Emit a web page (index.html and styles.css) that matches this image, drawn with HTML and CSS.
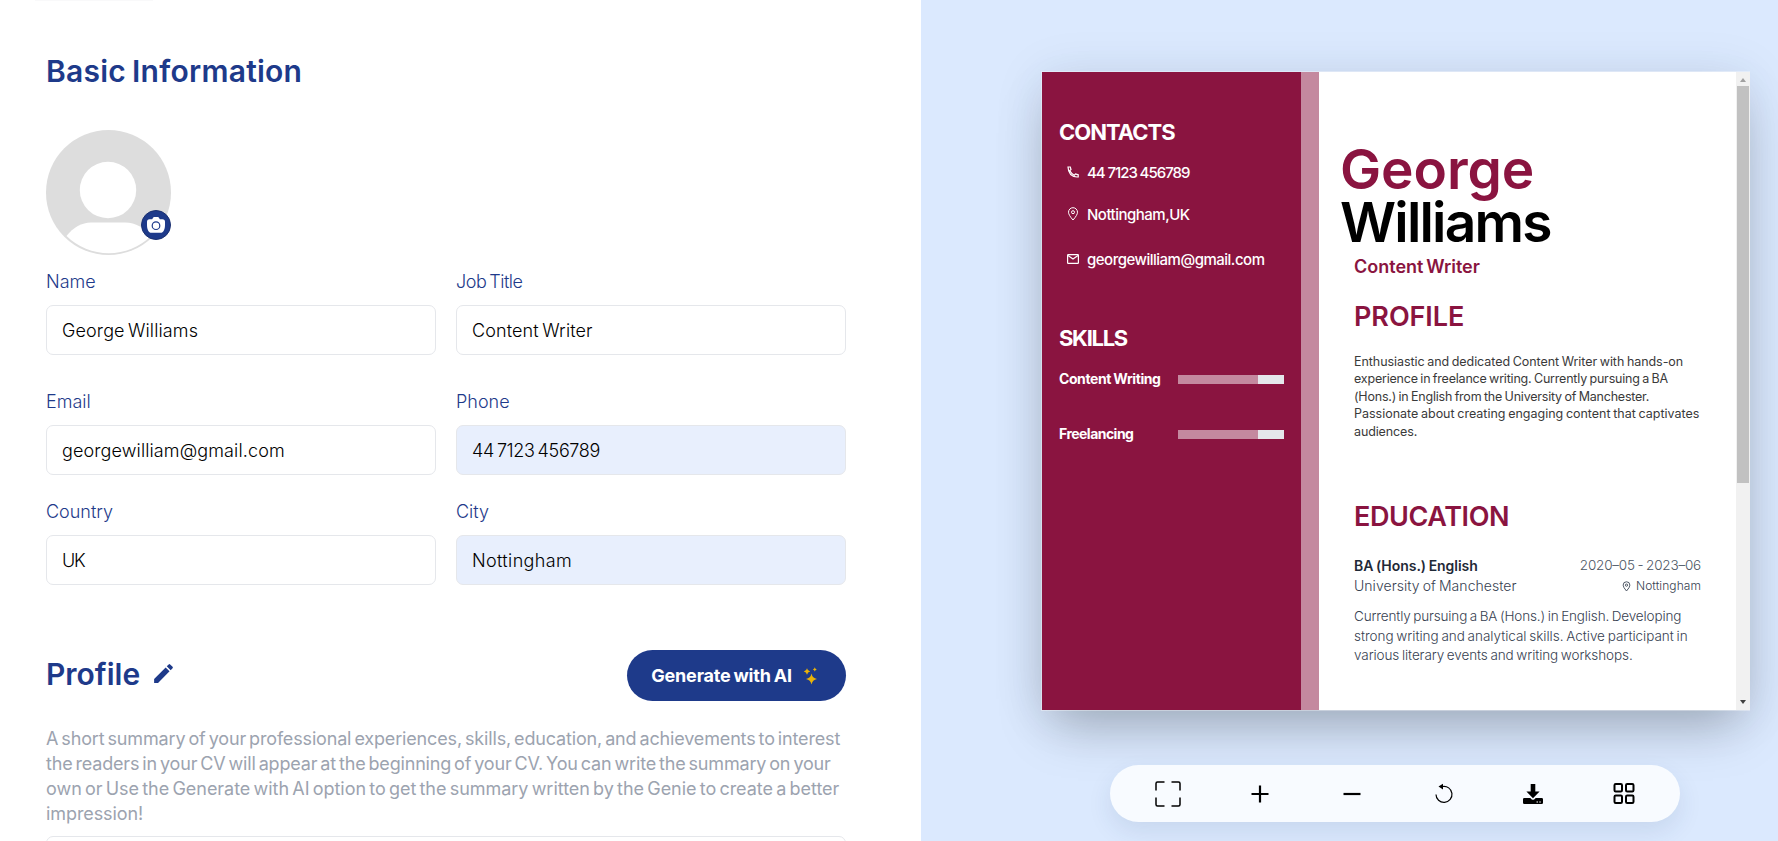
FILE: index.html
```html
<!DOCTYPE html>
<html lang="en">
<head>
<meta charset="utf-8">
<title>CV Builder</title>
<link rel="stylesheet" href="styles.css">
</head>
<body>
<main class="app">
  <section class="form">
    <div class="tab-edge"></div>
    <h2 class="heading basic">Basic Information</h2>
    <div class="avatar">
      <svg width="125" height="125" viewBox="0 0 125 125">
        <circle cx="62.5" cy="62.5" r="62.5" fill="#ddd"/>
        <circle cx="62" cy="60" r="28.2" fill="#fff"/>
        <path d="M20.5 106C27 97.500 36 92.500 45 92.500H79C90 92.500 98 98 105 106A60.500 60.500 0 0 1 20.500 106Z" fill="#fff"/>
      </svg>
      <span class="badge">
        <svg width="20" height="20" viewBox="0 0 20 20">
          <path d="M6.200 4.200L7.200 2.500Q7.500 2 8.100 2H11.900Q12.500 2 12.800 2.500L13.800 4.200H16.500Q19 4.200 19 6.700V10C19 14 17.500 17.800 14.500 17.800H5.500C2.500 17.800 1 14 1 10V6.700Q1 4.200 3.500 4.200Z" fill="#fff"/>
          <circle cx="10" cy="10.700" r="3.800" fill="#fff" stroke="#1e3a8a" stroke-width="1.200"/>
        </svg>
      </span>
    </div>
    <div class="row first">
      <div class="field"><label>Name</label><div class="input">George Williams</div></div>
      <div class="field"><label class="job">Job Title</label><div class="input">Content Writer</div></div>
    </div>
    <div class="row second">
      <div class="field"><label>Email</label><div class="input">georgewilliam@gmail.com</div></div>
      <div class="field"><label>Phone</label><div class="input filled digits">44 7123 456789</div></div>
    </div>
    <div class="row third">
      <div class="field"><label>Country</label><div class="input country">UK</div></div>
      <div class="field"><label>City</label><div class="input filled city">Nottingham</div></div>
    </div>
    <div class="profile-head">
      <h2 class="heading profile">Profile</h2>
      <svg class="pencil" width="25" height="25" viewBox="0 0 24 24" fill="#1e3a8a"><path d="M3 17.250V21h3.750L17.810 9.940l-3.750-3.750L3 17.250zM20.710 7.040a.996.996 0 0 0 0-1.410l-2.340-2.340a.996.996 0 0 0-1.410 0l-1.830 1.830 3.750 3.750 1.830-1.830z"/></svg>
      <button class="generate">Generate with AI
        <svg width="15" height="18" viewBox="0 0 15 18" fill="#eab308"><path d="M8.500 6.500Q9.400 11.200 14 12Q9.400 12.800 8.500 17.500Q7.600 12.800 3 12Q7.600 11.200 8.500 6.500ZM4 1.200Q4.600 4 7.200 4.500Q4.600 5 4 7.800Q3.400 5 .8 4.500Q3.400 4 4 1.200ZM11.800.3Q12.200 2 13.800 2.400Q12.200 2.800 11.800 4.500Q11.400 2.800 9.800 2.400Q11.400 2 11.800.3Z"/></svg>
      </button>
    </div>
    <p class="hint">
      <span class="h1">A short summary of your professional experiences, skills, education, and achievements to interest</span>
      <span class="h2">the readers in your CV will appear at the beginning of your CV. You can write the summary on your</span>
      <span class="h3">own or Use the Generate with AI option to get the summary written by the Genie to create a better</span>
      <span class="h4">impression!</span>
    </p>
    <div class="textarea"></div>
  </section>

  <section class="preview">
    <article class="cv">
      <aside class="side">
        <h3 class="side-title contacts">CONTACTS</h3>
        <div class="contact phone"><svg width="12" height="12" viewBox="0 0 12 12" fill="none" stroke="#fff" stroke-width="1.200"><path d="M1 1H3.300L4 3.500L2.800 4.700Q4.300 7.500 7.300 9.200L8.500 8L11.200 8.800V11H10Q1.500 10.500 1 1Z"/></svg><span class="num">44 7123 456789</span></div>
        <div class="contact place"><svg width="12" height="14" viewBox="0 0 12 14" fill="none" stroke="#fff" stroke-width="1"><path d="M6 13Q1.500 8 1.500 5.200A4.500 4.500 0 0 1 10.500 5.200Q10.500 8 6 13Z"/><circle cx="6" cy="5.200" r="1.500"/></svg><span>Nottingham,UK</span></div>
        <div class="contact mail"><svg width="12" height="12" viewBox="0 0 12 12" fill="none" stroke="#fff" stroke-width="1.200"><rect x=".6" y="1.600" width="10.800" height="8.800" rx=".6"/><path d="M1 2.500L6 6L11 2.500"/></svg><span>georgewilliam@gmail.com</span></div>
        <h3 class="side-title skills">SKILLS</h3>
        <div class="skill"><span>Content Writing</span><div class="bar"><div class="level" style="width:75%"></div></div></div>
        <div class="skill"><span class="free">Freelancing</span><div class="bar"><div class="level" style="width:75%"></div></div></div>
      </aside>
      <div class="stripe"></div>
      <div class="main">
        <h1 class="name"><span class="given">George</span><span class="family">Williams</span></h1>
        <div class="role">Content Writer</div>
        <h3 class="section about">PROFILE</h3>
        <p class="summary">
          <span class="s1">Enthusiastic and dedicated Content Writer with hands-on</span>
          <span class="s2">experience in freelance writing. Currently pursuing a BA</span>
          <span class="s3">(Hons.) in English from the University of Manchester.</span>
          <span class="s4">Passionate about creating engaging content that captivates</span>
          <span class="s5">audiences.</span>
        </p>
        <h3 class="section education">EDUCATION</h3>
        <div class="line"><span class="degree">BA (Hons.) English</span><span class="date">2020–05 - 2023–06</span></div>
        <div class="line"><span class="school">University of Manchester</span><span class="town"><svg width="9" height="11" viewBox="0 0 12 14" fill="none" stroke="#4b5563" stroke-width="1.300"><path d="M6 13Q1.500 8 1.500 5.200A4.500 4.500 0 0 1 10.500 5.200Q10.500 8 6 13Z"/><circle cx="6" cy="5.200" r="1.500"/></svg>Nottingham</span></div>
        <p class="detail">
          <span class="d1">Currently pursuing a BA (Hons.) in English. Developing</span>
          <span class="d2">strong writing and analytical skills. Active participant in</span>
          <span class="d3">various literary events and writing workshops.</span>
        </p>
      </div>
      <div class="scroll">
        <svg width="14" height="14" viewBox="0 0 14 14"><path d="M4 10L7 6L10 10Z" fill="#a0a0a0"/></svg>
        <div class="thumb"></div>
        <svg width="14" height="14" viewBox="0 0 14 14"><path d="M4 4H10L7 8Z" fill="#404040"/></svg>
      </div>
    </article>
    <nav class="tools">
      <svg width="26" height="26" viewBox="0 0 26 26" fill="none" stroke="#000" stroke-width="1.500"><path d="M1 9.500V2.500Q1 1 2.500 1H9.500M16.500 1H23.500Q25 1 25 2.500V9.500M25 16.500V23.500Q25 25 23.500 25H16.500M9.500 25H2.500Q1 25 1 23.500V16.500"/></svg>
      <svg width="26" height="26" viewBox="0 0 26 26" fill="none" stroke="#000" stroke-width="2.200"><path d="M13 4.500V21.500M4.500 13H21.500"/></svg>
      <svg width="26" height="26" viewBox="0 0 26 26" fill="none" stroke="#000" stroke-width="2.200"><path d="M4.500 13H21.500"/></svg>
      <svg width="26" height="26" viewBox="0 0 26 26" fill="none" stroke="#000" stroke-width="1.200"><path d="M11.500 5.500A8 8 0 1 1 5 13.400"/><path d="M7.500 5.600L12 2.800V8.400Z" fill="#000" stroke="none"/></svg>
      <svg class="download" width="26" height="26" viewBox="0 0 26 26" fill="#000"><path d="M10.700 3H15.300V10.500H19.600L13 17.200L6.400 10.500H10.700Z"/><path d="M4.300 17H10.300L11.800 18.400Q13 19.300 14.200 18.400L15.700 17H21.700Q23 17 23 18.200V21.800Q23 23 21.700 23H4.300Q3 23 3 21.800V18.200Q3 17 4.300 17Z"/><path d="M16.500 20.500h1.500v1h-1.500zM19.300 20.500h1.500v1h-1.500z" fill="#fff"/></svg>
      <svg class="templates" width="26" height="26" viewBox="0 0 26 26" fill="none" stroke="#000" stroke-width="2"><rect x="3.500" y="3" width="7.500" height="7.500" rx="1.200"/><rect x="15" y="3" width="7.500" height="7.500" rx="1.200"/><rect x="3.500" y="14.500" width="7.500" height="7.500" rx="1.200"/><rect x="15" y="14.500" width="7.500" height="7.500" rx="1.200"/></svg>
    </nav>
  </section>
</main>
</body>
</html>
```
FILE: styles.css
```css
* { box-sizing: border-box; margin: 0; padding: 0; }
body { font-family: Inter, "Open Sans", sans-serif; word-spacing: -1.8px; overflow: hidden; }
svg { display: block; flex: none; }
.app { display: flex; width: 1778px; height: 841px; overflow: hidden; background: #fff; }

/* Form */
.form { width: 921px; padding: 0 75px 0 46px; flex: none; }
.tab-edge { width: 118px; height: 1px; margin-left: -11px; background: #f9f9fa; }
.heading { font-weight: 600; font-size: 30px; color: #1e3a8a; white-space: nowrap; }
.basic { margin-top: 50px; line-height: 40px; letter-spacing: .25px; }
.avatar { position: relative; width: 125px; height: 125px; margin-top: 39px; }
.badge { position: absolute; right: 0; bottom: 15px; width: 30px; height: 30px; border-radius: 50%; background: #1e3a8a; border: 1px solid #1b3070; display: flex; align-items: center; justify-content: center; }
.row { display: grid; grid-template-columns: 390px 390px; gap: 20px; }
.first { margin-top: 15px; }
.second { margin-top: 35px; }
.third { margin-top: 25px; }
.field label { display: block; font-size: 18px; line-height: 24px; font-weight: 300; color: #1e3a8a; }
.field .job { letter-spacing: -.45px; }
.input { margin-top: 11px; height: 50px; border: 1px solid #e5e7eb; border-radius: 7px; padding: 0 15px; font-size: 18px; line-height: 49px; font-weight: 300; letter-spacing: .12px; color: #000; }
.filled { background: #e8effd; }
.digits { letter-spacing: -.34px; }
.country { letter-spacing: -1.2px; }
.city { letter-spacing: .36px; }
.profile-head { display: flex; align-items: flex-start; margin-top: 65px; height: 51px; }
.profile { line-height: 48px; letter-spacing: 0; }
.pencil { margin: 11px 0 0 11px; }
.generate { margin-left: auto; width: 219px; height: 51px; border: 0; border-radius: 26px; background: #1e3a8a; color: #fff; font: 700 18px/53px Inter, sans-serif; word-spacing: -1.2px; letter-spacing: -.18px; display: flex; align-items: center; justify-content: center; gap: 11px; padding-right: 4px; }
.hint { margin-top: 25px; font-size: 18px; line-height: 25px; color: #9ca3af; }
.hint span, .summary span, .detail span { display: block; white-space: nowrap; }
.h1 { letter-spacing: -.163px; }
.h2 { letter-spacing: -.19px; }
.h3 { letter-spacing: -.03px; }
.h4 { letter-spacing: -.09px; }
.textarea { margin-top: 10px; height: 120px; border: 1px solid #e5e7eb; border-radius: 7px; }

/* Preview */
.preview { flex: 1; background: #dbe9fe; padding: 71px 0 0 120px; }
.cv { display: flex; width: 709px; height: 640px; border: 1px solid rgba(255,255,255,.35); border-right: 0; background: #fff; background-clip: padding-box; box-shadow: 0 25px 50px -12px rgba(0,0,0,.25), 0 4px 46px rgba(30,60,80,.1); }
.side { width: 259px; background: #8a1440; color: #fff; padding: 45px 0 0 17px; }
.stripe { width: 18px; background: #c4899f; }
.side-title { font-size: 22px; line-height: 30px; font-weight: 700; letter-spacing: -1px; }
.contact { display: flex; align-items: center; gap: 8px; padding-left: 8px; height: 20px; font-size: 15px; line-height: 20px; font-weight: 500; letter-spacing: -.5px; white-space: nowrap; }
.contact svg { margin-top: -2px; }
.num { word-spacing: -.4px; letter-spacing: -.97px; }
.phone { margin-top: 16px; }
.place { margin-top: 22px; }
.mail { margin-top: 25px; }
.skills { margin-top: 53px; letter-spacing: -1.3px; }
.skill { display: flex; align-items: center; margin-top: 16px; height: 20px; font-size: 14px; line-height: 20px; font-weight: 700; word-spacing: -.5px; letter-spacing: -.42px; }
.skill + .skill { margin-top: 35px; }
.skill span { width: 119px; white-space: nowrap; }
.skill .free { letter-spacing: -.53px; }
.bar { width: 106px; height: 9px; background: #e5e7eb; margin-top: 1px; }
.level { height: 100%; background: #c4899f; }
.main { width: 417px; padding: 71px 35px 0 35px; }
.name { margin-left: -14px; font-size: 55px; line-height: 53px; font-weight: 600; }
.name span { display: block; }
.given { color: #8a1440; letter-spacing: -.1px; }
.family { color: #000; letter-spacing: -1.8px; }
.role { margin-top: 6px; font-size: 18px; line-height: 24px; font-weight: 600; letter-spacing: 0; color: #8a1440; }
.section { font-size: 27px; line-height: 36px; font-weight: 600; color: #8a1440; }
.about { margin-top: 20px; letter-spacing: -.07px; }
.summary { margin-top: 18px; font-size: 12.5px; line-height: 17.4px; font-weight: 400; word-spacing: -.8px; color: #3a3a3a; }
.s1 { letter-spacing: -.06px; }
.s2 { letter-spacing: -.2px; }
.s3 { letter-spacing: -.21px; }
.s4 { letter-spacing: -.01px; }
.s5 { letter-spacing: -.12px; }
.education { margin-top: 59px; letter-spacing: -.41px; }
.line { display: flex; justify-content: space-between; height: 21px; font-size: 14px; line-height: 21px; font-weight: 300; word-spacing: -.9px; color: #374151; white-space: nowrap; }
.education + .line { margin-top: 20px; }
.education + .line + .line { height: 20px; line-height: 20px; }
.degree { font-weight: 600; color: #1f2937; letter-spacing: -.03px; }
.school { letter-spacing: .04px; }
.date { font-size: 13.5px; color: #4b5563; letter-spacing: -.2px; }
.town { display: flex; align-items: center; gap: 5px; font-size: 12px; letter-spacing: .07px; }
.detail { margin-top: 11px; font-size: 13.5px; line-height: 19.6px; font-weight: 300; word-spacing: -1px; color: #374151; }
.d1 { letter-spacing: -.145px; }
.d2 { letter-spacing: -.02px; }
.d3 { letter-spacing: -.09px; }
.scroll { display: flex; flex-direction: column; justify-content: space-between; width: 14px; background: #f1f1f1; }
.thumb { width: 12px; height: 397px; margin: 0 1px auto; background: #c1c1c1; }
.tools { display: flex; align-items: center; gap: 66px; width: 570px; height: 57px; margin: 54px 0 0 69px; padding-left: 44.5px; border-radius: 29px; background: #f8fbff; box-shadow: 0 10px 25px rgba(30,60,100,.1); }
.download { margin-left: -2.5px; }
.templates { margin-left: -1.500px; }
```
